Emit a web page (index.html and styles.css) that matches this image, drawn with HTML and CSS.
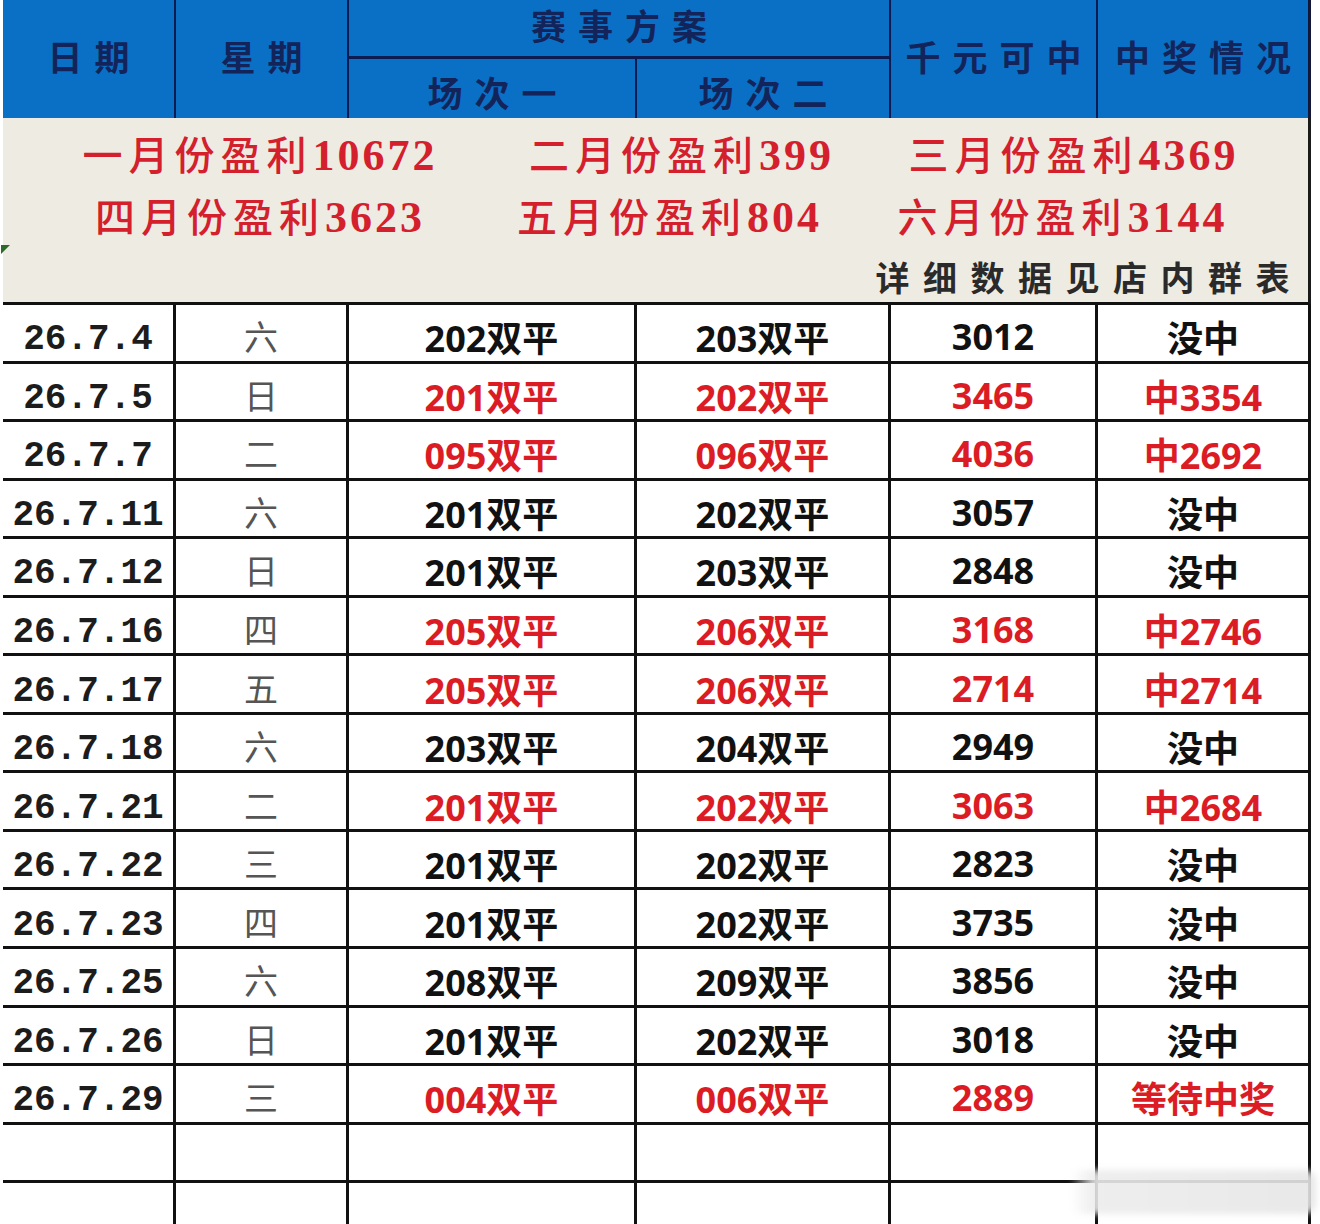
FILE: index.html
```html
<!DOCTYPE html>
<html lang="zh-CN">
<head>
<meta charset="utf-8">
<title>赛事方案</title>
<link rel="stylesheet" href="styles.css">
</head>
<body>
<div class="sheet">
  <div class="head">
    <div class="hc span2 mid">日期</div>
    <div class="hc span2 mid">星期</div>
    <div class="hc group">赛事方案</div>
    <div class="hc span2 mid">千元可中</div>
    <div class="hc span2 mid last">中奖情况</div>
    <div class="hc sub">场次一</div>
    <div class="hc sub">场次二</div>
  </div>

  <div class="info">
    <div class="pl a">
      <span>一月份盈利<b class="num">10672</b></span>
      <span>二月份盈利<b class="num">399</b></span>
      <span>三月份盈利<b class="num">4369</b></span>
    </div>
    <div class="pl b">
      <span>四月份盈利<b class="num">3623</b></span>
      <span>五月份盈利<b class="num">804</b></span>
      <span>六月份盈利<b class="num">3144</b></span>
    </div>
    <div class="note">详细数据见店内群表</div>
    <div class="flag"></div>
  </div>

  <div class="body">
    <div class="c date">26.7.4</div><div class="c wd">六</div><div class="c m">202双平</div><div class="c m">203双平</div><div class="c m">3012</div><div class="c m">没中</div>
    <div class="c date">26.7.5</div><div class="c wd">日</div><div class="c m red">201双平</div><div class="c m red">202双平</div><div class="c m red">3465</div><div class="c m red">中3354</div>
    <div class="c date">26.7.7</div><div class="c wd">二</div><div class="c m red">095双平</div><div class="c m red">096双平</div><div class="c m red">4036</div><div class="c m red">中2692</div>
    <div class="c date">26.7.11</div><div class="c wd">六</div><div class="c m">201双平</div><div class="c m">202双平</div><div class="c m">3057</div><div class="c m">没中</div>
    <div class="c date">26.7.12</div><div class="c wd">日</div><div class="c m">201双平</div><div class="c m">203双平</div><div class="c m">2848</div><div class="c m">没中</div>
    <div class="c date">26.7.16</div><div class="c wd">四</div><div class="c m red">205双平</div><div class="c m red">206双平</div><div class="c m red">3168</div><div class="c m red">中2746</div>
    <div class="c date">26.7.17</div><div class="c wd">五</div><div class="c m red">205双平</div><div class="c m red">206双平</div><div class="c m red">2714</div><div class="c m red">中2714</div>
    <div class="c date">26.7.18</div><div class="c wd">六</div><div class="c m">203双平</div><div class="c m">204双平</div><div class="c m">2949</div><div class="c m">没中</div>
    <div class="c date">26.7.21</div><div class="c wd">二</div><div class="c m red">201双平</div><div class="c m red">202双平</div><div class="c m red">3063</div><div class="c m red">中2684</div>
    <div class="c date">26.7.22</div><div class="c wd">三</div><div class="c m">201双平</div><div class="c m">202双平</div><div class="c m">2823</div><div class="c m">没中</div>
    <div class="c date">26.7.23</div><div class="c wd">四</div><div class="c m">201双平</div><div class="c m">202双平</div><div class="c m">3735</div><div class="c m">没中</div>
    <div class="c date">26.7.25</div><div class="c wd">六</div><div class="c m">208双平</div><div class="c m">209双平</div><div class="c m">3856</div><div class="c m">没中</div>
    <div class="c date">26.7.26</div><div class="c wd">日</div><div class="c m">201双平</div><div class="c m">202双平</div><div class="c m">3018</div><div class="c m">没中</div>
    <div class="c date">26.7.29</div><div class="c wd">三</div><div class="c m red">004双平</div><div class="c m red">006双平</div><div class="c m red">2889</div><div class="c m red">等待中奖</div>
    <div class="c"></div><div class="c"></div><div class="c"></div><div class="c"></div><div class="c"></div><div class="c"></div>
    <div class="c"></div><div class="c"></div><div class="c"></div><div class="c"></div><div class="c"></div><div class="c"></div>
  </div>

  <div class="wm"></div>
</div>
</body>
</html>
```

FILE: styles.css
```css
* {
  box-sizing: border-box;
  margin: 0;
  padding: 0;
}

html, body {
  background: #ffffff;
}

body {
  height: 1224px;
  overflow: hidden;
  font-family: "Noto Sans CJK SC", sans-serif;
}

.sheet {
  width: 1308px;
  margin-left: 3px;
  position: relative;
}

/* ---------- header ---------- */
.head {
  display: grid;
  grid-template-columns: 173px 173px 288px 254px 207px 213px;
  grid-template-rows: 59px 59px;
  background: #0a70c6;
}

.hc {
  display: flex;
  align-items: center;
  justify-content: center;
  color: #13245a;
  font-family: "Noto Sans CJK SC", sans-serif;
  font-weight: 700;
  font-size: 35px;
  letter-spacing: 12px;
  padding-left: 12px;
  border-right: 2px solid #0c1c52;
  white-space: nowrap;
}

.hc.last {
  border-right: 3px solid #13183a;
}

.span2 {
  grid-row: span 2;
}

.mid {
  padding-bottom: 8px;
}

.group {
  grid-column: span 2;
  border-bottom: 3px solid #0c1c52;
  padding-bottom: 8px;
}

.sub {
  padding-top: 6px;
}

/* ---------- info block ---------- */
.info {
  position: relative;
  height: 187px;
  padding-top: 4px;
  background: #eeebe3;
  border-right: 3px solid #1a1a1a;
  border-bottom: 3px solid #111111;
}

.pl {
  display: grid;
  grid-template-columns: 514px 300px 1fr;
  height: 62px;
  align-items: center;
}

.pl span {
  text-align: center;
  white-space: nowrap;
  font-family: "Noto Sans CJK SC", sans-serif;
  font-weight: 500;
  font-size: 40px;
  letter-spacing: 6px;
  color: #d4202c;
}

.pl .num {
  font-family: "Liberation Serif", serif;
  font-weight: 700;
  font-size: 44px;
  letter-spacing: 3px;
}

.pl.a span:nth-child(2) {
  padding-left: 12px;
}

.pl.a span:nth-child(3) {
  padding-left: 22px;
}

.pl.b span:nth-child(2) {
  padding-right: 14px;
}

.note {
  height: 55px;
  line-height: 62px;
  text-align: right;
  padding-right: 5px;
  font-family: "Noto Sans CJK SC", sans-serif;
  font-weight: 700;
  font-size: 34px;
  letter-spacing: 13.5px;
  color: #2a2a2a;
  white-space: nowrap;
}

.flag {
  position: absolute;
  left: -2px;
  top: 127px;
  width: 0;
  height: 0;
  border-top: 9px solid #2c6b2c;
  border-right: 9px solid transparent;
}

/* ---------- body ---------- */
.body {
  display: grid;
  grid-template-columns: 173px 173px 288px 254px 207px 213px;
  grid-auto-rows: 58.55px;
}

.c {
  display: flex;
  align-items: center;
  justify-content: center;
  border-right: 3px solid #111111;
  border-bottom: 3px solid #111111;
  white-space: nowrap;
}

.date {
  font-family: "Liberation Mono", monospace;
  font-weight: 700;
  font-size: 36px;
  color: #1c1c1c;
  padding-top: 14px;
}

.wd {
  font-family: "Noto Sans CJK SC", sans-serif;
  font-weight: 400;
  font-size: 34px;
  color: #555555;
  padding-top: 6px;
}

.m {
  font-family: "Open Sans", "Noto Sans CJK SC", sans-serif;
  font-weight: 700;
  font-size: 36px;
  color: #111111;
  padding-top: 8px;
}

.m.red {
  color: #dc1c24;
}

/* ---------- watermark ---------- */
.wm {
  position: absolute;
  left: 1067px;
  top: 1170px;
  width: 246px;
  height: 44px;
  border-radius: 10px;
  background: linear-gradient(90deg, rgba(255,255,255,0) 0%, rgba(236,236,236,0.9) 10%, rgba(230,230,230,0.9) 100%);
  filter: blur(3px);
}
```
